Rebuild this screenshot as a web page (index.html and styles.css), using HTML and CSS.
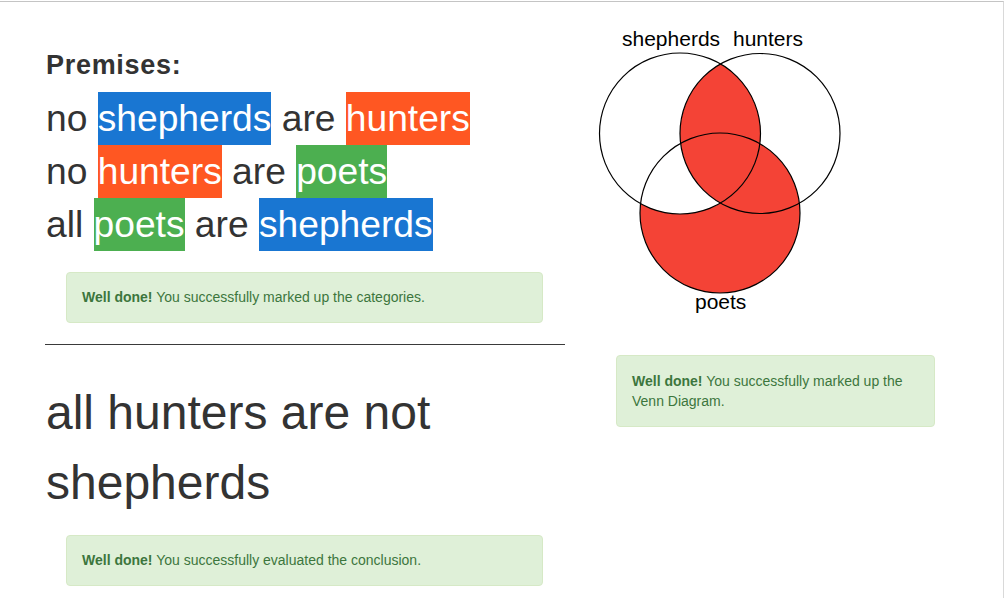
FILE: index.html
```html
<!DOCTYPE html>
<html>
<head>
<meta charset="utf-8">
<link rel="stylesheet" href="styles.css">
</head>
<body>
<div class="frame">
  <div class="page">
    <div class="left">
      <h3 class="premises-title">Premises:</h3>
      <div class="premise">no <span class="cat blue">shepherds</span> are <span class="cat orange">hunters</span></div>
      <div class="premise">no <span class="cat orange">hunters</span> are <span class="cat green">poets</span></div>
      <div class="premise">all <span class="cat green">poets</span> are <span class="cat blue">shepherds</span></div>
      <div class="alert alert-first"><strong>Well done!</strong> You successfully marked up the categories.</div>
      <hr class="divider">
      <h1 class="conclusion">all hunters are not shepherds</h1>
      <div class="alert alert-last"><strong>Well done!</strong> You successfully evaluated the conclusion.</div>
    </div>
    <div class="right">
      <svg class="venn" width="270" height="300" viewBox="0 0 270 300">
        <defs>
          <clipPath id="clipP"><circle cx="130" cy="192" r="80"/></clipPath>
          <clipPath id="clipS"><circle cx="90" cy="112.5" r="80.5"/></clipPath>
        </defs>
        <circle cx="130" cy="192" r="80" fill="#f44336"/>
        <circle cx="90" cy="112.5" r="80.5" fill="#ffffff" clip-path="url(#clipP)"/>
        <circle cx="170" cy="112.5" r="80" fill="#f44336" clip-path="url(#clipS)"/>
        <circle cx="90" cy="112.5" r="80.5" fill="none" stroke="#000" stroke-width="1.2"/>
        <circle cx="170" cy="112.5" r="80" fill="none" stroke="#000" stroke-width="1.2"/>
        <circle cx="130" cy="192" r="80" fill="none" stroke="#000" stroke-width="1.2"/>
        <text x="32" y="25" class="vlabel">shepherds</text>
        <text x="143" y="25" class="vlabel">hunters</text>
        <text x="105" y="288" class="vlabel">poets</text>
      </svg>
      <div class="alert alert-venn"><strong>Well done!</strong> You successfully marked up the Venn Diagram.</div>
    </div>
  </div>
</div>
</body>
</html>
```

FILE: styles.css
```css
html, body {
  margin: 0;
  padding: 0;
  background: #ffffff;
}
body {
  padding-top: 1px;
  font-family: "Liberation Sans", Arial, Helvetica, sans-serif;
  color: #333333;
}
.frame {
  width: 1004px;
  height: 597px;
  border-top: 1px solid #c4c4c4;
  border-right: 1px solid #d9d9d9;
  box-sizing: border-box;
  overflow: hidden;
}
.page {
  display: flex;
  padding-left: 45px;
}
.left {
  width: 520px;
  padding-top: 49px;
}
.premises-title {
  margin: 0 0 12px 1px;
  font-size: 27px;
  line-height: 28.6px;
  font-weight: bold;
  letter-spacing: 0.7px;
}
.premise {
  font-size: 37.2px;
  line-height: 53px;
  height: 53px;
  white-space: nowrap;
  padding-left: 1px;
}
.cat {
  display: inline-block;
  line-height: 53px;
  color: #ffffff;
}
.blue { background: #1976d2; }
.orange { background: #ff5722; }
.green { background: #4caf50; }
.alert {
  background: #dff0d8;
  border: 1px solid #d6e9c6;
  border-radius: 4px;
  color: #3c763d;
  font-size: 14px;
  line-height: 19px;
  padding: 15px;
}
.alert strong { font-weight: bold; }
.alert-first {
  margin: 21px 22px 0 21px;
}
.divider {
  margin: 21px 0 0 0;
  border: 0;
  border-top: 1px solid #3a3a3a;
  height: 0;
}
.conclusion {
  margin: 33px 0 0 1px;
  font-size: 48px;
  line-height: 70px;
  font-weight: normal;
}
.alert-last {
  margin: 17px 22px 0 21px;
}
.right {
  margin-left: 25px;
  padding-top: 19px;
}
.venn {
  display: block;
}
.vlabel {
  font-family: "Liberation Sans", Arial, sans-serif;
  font-size: 21px;
  fill: #000000;
}
.alert-venn {
  margin: 34px 0 0 26px;
  width: 287px;
  line-height: 20px;
}
```
